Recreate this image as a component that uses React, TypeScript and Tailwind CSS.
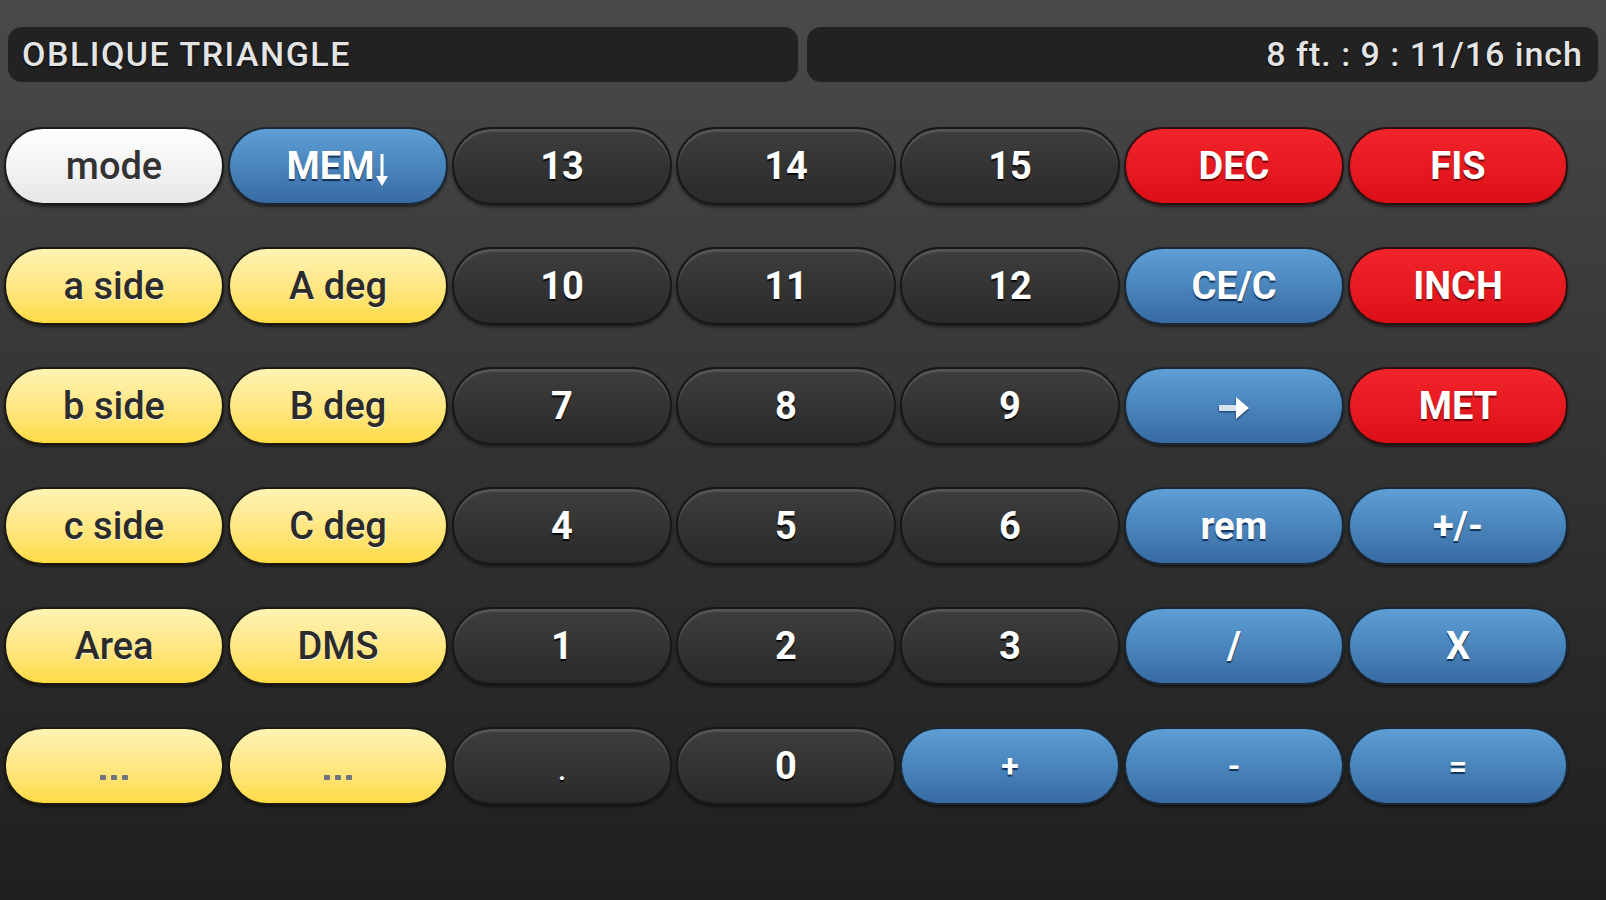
import React from 'react';

type Variant = 'dark' | 'yellow' | 'blue' | 'red' | 'white';

const variantClass: Record<Variant, string> = {
  dark: 'from-[#3e3e3e] to-[#2a2a2a] border-[#171717] text-white font-bold [text-shadow:0_2px_1px_rgba(0,0,0,0.9)] shadow-[inset_0_3px_0_rgba(255,255,255,0.12),0_2px_3px_rgba(0,0,0,0.5)]',
  yellow: 'from-[#fff3b4] to-[#ffdb42] border-[#1b1a12] text-[#2b2b2b] font-medium [text-shadow:0_1px_1px_rgba(255,255,255,0.9)] shadow-[0_2px_3px_rgba(0,0,0,0.5)]',
  blue: 'from-[#5d9fd5] to-[#386ba3] border-[#1b2735] text-white font-bold [text-shadow:0_2px_1px_rgba(10,40,80,0.9)] shadow-[0_2px_3px_rgba(0,0,0,0.5)]',
  red: 'from-[#f2242c] to-[#dc0e17] border-[#2b1212] text-white font-bold [text-shadow:0_2px_1px_rgba(80,0,0,0.8)] shadow-[0_2px_3px_rgba(0,0,0,0.5)]',
  white: 'from-[#ffffff] to-[#e7e7e7] border-[#1b1b1b] text-[#333] font-medium [text-shadow:0_1px_1px_rgba(255,255,255,0.9)] shadow-[0_2px_3px_rgba(0,0,0,0.5)]',
};

interface Key {
  label: React.ReactNode;
  variant: Variant;
}

const Dots = () => (
  <span className="flex gap-[5px] mt-[22px]">
    <span className="w-[6px] h-[5px] rounded-[1px] bg-[#6f7382]" />
    <span className="w-[6px] h-[5px] rounded-[1px] bg-[#6f7382]" />
    <span className="w-[6px] h-[5px] rounded-[1px] bg-[#6f7382]" />
  </span>
);

const rows: Key[][] = [
  [
    { label: 'mode', variant: 'white' },
    {
      label: (
        <span className="flex items-center">
          MEM
          <svg width="14" height="36" viewBox="0 0 14 36" className="ml-[1px] mt-[8px]">
            <path d="M7 2 V31" stroke="white" strokeWidth="3" />
            <path d="M1 24 L7 34 L13 24 Z" fill="white" />
          </svg>
        </span>
      ),
      variant: 'blue',
    },
    { label: '13', variant: 'dark' },
    { label: '14', variant: 'dark' },
    { label: '15', variant: 'dark' },
    { label: 'DEC', variant: 'red' },
    { label: 'FIS', variant: 'red' },
  ],
  [
    { label: 'a side', variant: 'yellow' },
    { label: 'A deg', variant: 'yellow' },
    { label: '10', variant: 'dark' },
    { label: '11', variant: 'dark' },
    { label: '12', variant: 'dark' },
    { label: 'CE/C', variant: 'blue' },
    { label: 'INCH', variant: 'red' },
  ],
  [
    { label: 'b side', variant: 'yellow' },
    { label: 'B deg', variant: 'yellow' },
    { label: '7', variant: 'dark' },
    { label: '8', variant: 'dark' },
    { label: '9', variant: 'dark' },
    {
      label: (
        <svg width="32" height="24" viewBox="0 0 32 24" className="mt-[4px] drop-shadow-[0_1px_1px_rgba(10,40,80,0.9)]">
          <rect x="1" y="9" width="18" height="6" fill="#d6e2ee" />
          <path d="M18 1 L31 12 L18 23 Z" fill="white" />
        </svg>
      ),
      variant: 'blue',
    },
    { label: 'MET', variant: 'red' },
  ],
  [
    { label: 'c side', variant: 'yellow' },
    { label: 'C deg', variant: 'yellow' },
    { label: '4', variant: 'dark' },
    { label: '5', variant: 'dark' },
    { label: '6', variant: 'dark' },
    { label: 'rem', variant: 'blue' },
    { label: '+/-', variant: 'blue' },
  ],
  [
    { label: 'Area', variant: 'yellow' },
    { label: 'DMS', variant: 'yellow' },
    { label: '1', variant: 'dark' },
    { label: '2', variant: 'dark' },
    { label: '3', variant: 'dark' },
    { label: '/', variant: 'blue' },
    { label: 'X', variant: 'blue' },
  ],
  [
    { label: <Dots />, variant: 'yellow' },
    { label: <Dots />, variant: 'yellow' },
    { label: <span className="text-[26px] mt-[10px]">.</span>, variant: 'dark' },
    { label: '0', variant: 'dark' },
    { label: <span className="text-[32px]">+</span>, variant: 'blue' },
    { label: <span className="text-[32px]">-</span>, variant: 'blue' },
    { label: <span className="text-[32px]">=</span>, variant: 'blue' },
  ],
];

function CalcKey({ label, variant }: Key) {
  return (
    <button
      className={`h-[78px] rounded-full border-2 bg-linear-to-b flex items-center justify-center text-[38px] leading-none ${variantClass[variant]}`}
    >
      {label}
    </button>
  );
}

export default function App() {
  return (
    <div className="h-[900px] w-full overflow-hidden bg-linear-to-b from-[#4a4a4a] via-[#333333] to-[#1f1f1f] font-['Roboto',sans-serif]">
      {/* display bars */}
      <div className="flex gap-[9px] px-[8px] pt-[27px]">
        <div className="flex-1 h-[55px] rounded-[14px] bg-[#222] flex items-center pl-[14px] text-[34px] font-medium text-[#e4e4e4] tracking-[1.5px] [text-shadow:0_1px_2px_#000]">
          OBLIQUE TRIANGLE
        </div>
        <div className="flex-1 h-[55px] rounded-[14px] bg-[#222] flex items-center justify-end pr-[15px] text-[34px] font-medium text-[#e4e4e4] tracking-[1px] [text-shadow:0_1px_2px_#000]">
          8 ft. : 9 : 11/16 inch
        </div>
      </div>

      {/* keypad */}
      <div className="mt-[45px] ml-[4px] grid grid-cols-[repeat(7,220px)] gap-x-[4px] gap-y-[42px]">
        {rows.flat().map((k, i) => (
          <CalcKey key={i} {...k} />
        ))}
      </div>
    </div>
  );
}
